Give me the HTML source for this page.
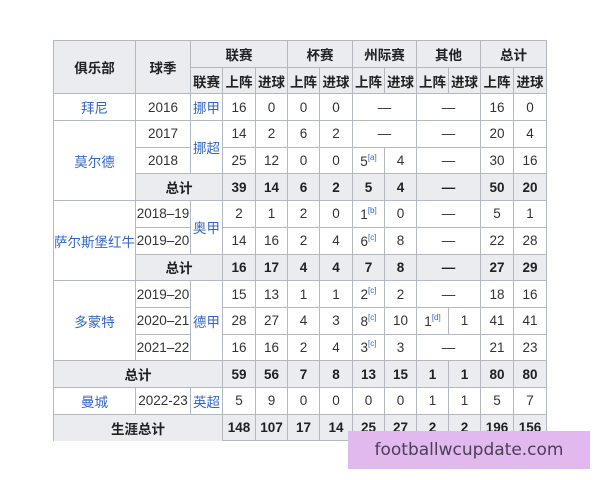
<!DOCTYPE html>
<html><head><meta charset="utf-8"><style>
body{margin:0;width:600px;height:480px;background:#fff;position:relative;overflow:hidden;font-family:"Liberation Sans","Noto Sans CJK SC",sans-serif;}
table{position:absolute;left:53px;top:40px;border-collapse:collapse;table-layout:fixed;width:493px;font-size:13.5px;color:#333;}
td,th{border:1px solid #b4b9c0;text-align:center;padding:0;height:25.7px;white-space:nowrap;overflow:hidden;}
th{background:#eaecf0;font-weight:bold;color:#202122;}
tr.t td,tr.t th{background:#eaecf0;font-weight:bold;color:#202122;}
a{color:#3366cc;text-decoration:none;}
sup{font-size:8px;color:#3366cc;vertical-align:6px;}
.wm{position:absolute;left:348px;top:431px;width:242px;height:38px;background:#e2b9ef;color:#4a3f55;font-size:17px;line-height:38px;text-align:center;font-family:"DejaVu Sans",sans-serif;}
</style></head><body>
<table>
<colgroup><col style="width:82px"><col style="width:55px"><col style="width:32px"><col style="width:33px"><col style="width:32px"><col style="width:32px"><col style="width:33px"><col style="width:32px"><col style="width:32px"><col style="width:32px"><col style="width:32px"><col style="width:33px"><col style="width:33px"></colgroup>
<tr><th rowspan="2">俱乐部</th><th rowspan="2">球季</th><th colspan="3">联赛</th><th colspan="2">杯赛</th><th colspan="2">州际赛</th><th colspan="2">其他</th><th colspan="2">总计</th></tr>
<tr><th>联赛</th><th>上阵</th><th>进球</th><th>上阵</th><th>进球</th><th>上阵</th><th>进球</th><th>上阵</th><th>进球</th><th>上阵</th><th>进球</th></tr>
<tr><td><a>拜尼</a></td><td>2016</td><td><a>挪甲</a></td><td>16</td><td>0</td><td>0</td><td>0</td><td colspan="2">—</td><td colspan="2">—</td><td>16</td><td>0</td></tr>
<tr><td rowspan="3"><a>莫尔德</a></td><td>2017</td><td rowspan="2"><a>挪超</a></td><td>14</td><td>2</td><td>6</td><td>2</td><td colspan="2">—</td><td colspan="2">—</td><td>20</td><td>4</td></tr>
<tr><td>2018</td><td>25</td><td>12</td><td>0</td><td>0</td><td>5<sup>[a]</sup></td><td>4</td><td colspan="2">—</td><td>30</td><td>16</td></tr>
<tr class="t"><td colspan="2">总计</td><td>39</td><td>14</td><td>6</td><td>2</td><td>5</td><td>4</td><td colspan="2">—</td><td>50</td><td>20</td></tr>
<tr><td rowspan="3" style="background:#fff"><a>萨尔斯堡红牛</a></td><td>2018–19</td><td rowspan="2"><a>奥甲</a></td><td>2</td><td>1</td><td>2</td><td>0</td><td>1<sup>[b]</sup></td><td>0</td><td colspan="2">—</td><td>5</td><td>1</td></tr>
<tr><td>2019–20</td><td>14</td><td>16</td><td>2</td><td>4</td><td>6<sup>[c]</sup></td><td>8</td><td colspan="2">—</td><td>22</td><td>28</td></tr>
<tr class="t"><td colspan="2">总计</td><td>16</td><td>17</td><td>4</td><td>4</td><td>7</td><td>8</td><td colspan="2">—</td><td>27</td><td>29</td></tr>
<tr><td rowspan="3"><a>多蒙特</a></td><td>2019–20</td><td rowspan="3"><a>德甲</a></td><td>15</td><td>13</td><td>1</td><td>1</td><td>2<sup>[c]</sup></td><td>2</td><td colspan="2">—</td><td>18</td><td>16</td></tr>
<tr><td>2020–21</td><td>28</td><td>27</td><td>4</td><td>3</td><td>8<sup>[c]</sup></td><td>10</td><td>1<sup>[d]</sup></td><td>1</td><td>41</td><td>41</td></tr>
<tr><td>2021–22</td><td>16</td><td>16</td><td>2</td><td>4</td><td>3<sup>[c]</sup></td><td>3</td><td colspan="2">—</td><td>21</td><td>23</td></tr>
<tr class="t"><td colspan="3">总计</td><td>59</td><td>56</td><td>7</td><td>8</td><td>13</td><td>15</td><td>1</td><td>1</td><td>80</td><td>80</td></tr>
<tr><td><a>曼城</a></td><td>2022-23</td><td><a>英超</a></td><td>5</td><td>9</td><td>0</td><td>0</td><td>0</td><td>0</td><td>1</td><td>1</td><td>5</td><td>7</td></tr>
<tr class="t"><td colspan="3" style="border-bottom:none">生涯总计</td><td>148</td><td>107</td><td>17</td><td>14</td><td>25</td><td>27</td><td>2</td><td>2</td><td>196</td><td>156</td></tr>
</table>
<div class="wm">footballwcupdate.com</div>
</body></html>
